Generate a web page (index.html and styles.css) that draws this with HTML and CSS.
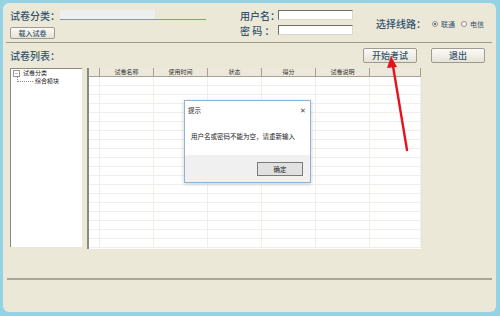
FILE: index.html
```html
<!DOCTYPE html>
<html lang="zh-CN">
<head>
  <meta charset="UTF-8">
  <title>考试客户端</title>
  <link rel="stylesheet" href="styles.css">
</head>
<body>
  <div class="window">
    <div class="top">
      <div class="paper">
        <div class="field-row">
          <span class="label">试卷分类：</span>
          <span class="combo"><span class="combo-fill"></span></span>
        </div>
        <button class="btn btn-small">载入试卷</button>
      </div>
      <div class="login">
        <div class="field-row">
          <span class="label login-label">用户名：</span>
          <span class="input"></span>
        </div>
        <div class="field-row">
          <span class="label login-label">密 码 ：</span>
          <span class="input"></span>
        </div>
      </div>
      <div class="line-select">
        <span class="label">选择线路：</span>
        <span class="radio"><span class="dot checked"></span>联通</span>
        <span class="radio"><span class="dot"></span>电信</span>
      </div>
    </div>

    <div class="list-bar">
      <span class="label">试卷列表：</span>
      <div class="actions">
        <button class="btn">开始考试</button>
        <button class="btn">退出</button>
      </div>
    </div>

    <div class="content">
      <div class="tree">
        <div class="tree-root"><span class="toggle">−</span>试卷分类</div>
        <div class="tree-child"><span class="branch"></span>综合模块</div>
      </div>
      <div class="grid">
        <table>
          <thead>
            <tr>
              <th class="c0"></th>
              <th>试卷名称</th>
              <th>使用时间</th>
              <th>状态</th>
              <th>得分</th>
              <th>试卷说明</th>
              <th class="last"></th>
            </tr>
          </thead>
          <tbody id="rows"></tbody>
        </table>
      </div>
    </div>

    <div class="status"></div>

    <!-- 提示框 -->
    <div class="dialog">
      <div class="dialog-title">
        <span>提示</span>
        <span class="close">✕</span>
      </div>
      <div class="dialog-body">用户名或密码不能为空，请重新输入</div>
      <div class="dialog-foot">
        <button class="ok">确定</button>
      </div>
    </div>

    <svg class="arrow" width="500" height="316" viewBox="0 0 500 316">
      <line x1="407" y1="150" x2="393" y2="66" stroke="#e3141c" stroke-width="2.4" stroke-linecap="round"/>
      <polygon points="391,56 387,68 397,67" fill="#e3141c"/>
    </svg>
  </div>

  <script>
    // пустые строки таблицы
    var body = document.getElementById('rows');
    for (var i = 0; i < 19; i++) {
      var tr = document.createElement('tr');
      for (var j = 0; j < 7; j++) {
        tr.appendChild(document.createElement('td'));
      }
      body.appendChild(tr);
    }
  </script>
</body>
</html>
```

FILE: styles.css
```css
body {
  margin: 0;
  background: #93d3e5;
  font-family: "Noto Sans CJK SC", "Noto Sans", sans-serif;
  width: 500px;
  height: 316px;
  overflow: hidden;
}
.window {
  position: relative;
  margin: 3px 4px 0 3px;
  height: 309px;
  background: #ebe8d8;
  border-radius: 6px;
  display: flex;
  flex-direction: column;
}
.label {
  font-size: 10px;
  line-height: 12px;
  font-weight: 500;
  color: #34536f;
  white-space: nowrap;
}
/* верхняя панель */
.top {
  height: 40px;
  margin: 0 4px 0 3px;
  padding: 7px 0 0 4px;
  box-sizing: border-box;
  border-bottom: 1px solid #9f998a;
  display: flex;
}
.paper {
  width: 230px;
  display: flex;
  flex-direction: column;
  align-items: flex-start;
}
.field-row {
  display: flex;
  align-items: flex-start;
  height: 12px;
}
.combo {
  display: block;
  width: 146px;
  height: 9px;
  border-bottom: 1px solid #7f9aa6;
}
.combo-fill {
  display: block;
  width: 95px;
  height: 9px;
  background: #eef0ef;
}
.btn {
  font-family: inherit;
  background: linear-gradient(#fbfaf6, #e6e3d6);
  border: 1px solid #9d9b92;
  border-radius: 2px;
  color: #34536f;
  font-weight: 500;
  font-size: 9px;
  line-height: 13px;
  width: 54px;
  height: 15px;
  padding: 0;
  cursor: pointer;
}
.btn-small {
  width: 45px;
  height: 12px;
  font-size: 7px;
  line-height: 10px;
  margin-top: 5px;
}
.login {
  display: flex;
  flex-direction: column;
  gap: 3px;
}
.login-label {
  width: 38px;
}
.input {
  display: block;
  width: 73px;
  height: 8px;
  background: #fff;
  border-top: 1px solid #6f6d66;
  border-left: 1px solid #6f6d66;
  border-right: 1px solid #dcd9cc;
  border-bottom: 1px solid #dcd9cc;
}
.line-select {
  display: flex;
  align-items: center;
  margin: 8px 0 0 23px;
  height: 12px;
}
.radio {
  display: flex;
  align-items: center;
  font-size: 7px;
  color: #34536f;
  margin-left: 6px;
}
.radio:first-of-type {
  margin-left: 8px;
}
.dot {
  width: 4px;
  height: 4px;
  border: 1px solid #8a8a8a;
  border-radius: 50%;
  background: #fff;
  margin-right: 3px;
  position: relative;
}
.dot.checked::after {
  content: "";
  position: absolute;
  left: 1px;
  top: 1px;
  width: 2px;
  height: 2px;
  border-radius: 50%;
  background: #333;
}
/* список */
.list-bar {
  display: flex;
  align-items: center;
  justify-content: space-between;
  padding: 3px 11px 0 7px;
  height: 19px;
}
.actions {
  display: flex;
  gap: 14px;
}
.content {
  display: flex;
  align-items: flex-start;
  gap: 5px;
  padding: 3px 0 0 7px;
}
.tree {
  width: 71px;
  height: 178px;
  background: #fff;
  border-top: 1px solid #8c8a80;
  border-left: 1px solid #8c8a80;
  font-size: 6px;
  line-height: 8px;
  color: #222;
}
.tree-root {
  display: flex;
  align-items: center;
  height: 8px;
  padding-left: 2px;
}
.toggle {
  width: 5px;
  height: 5px;
  border: 1px solid #999;
  font-size: 6px;
  line-height: 5px;
  text-align: center;
  margin-right: 3px;
  color: #333;
}
.tree-child {
  display: flex;
  align-items: center;
  height: 8px;
  padding-left: 6px;
}
.branch {
  width: 15px;
  height: 5px;
  border-left: 1px dotted #888;
  border-bottom: 1px dotted #888;
  margin: -5px 2px 0 0;
}
.grid {
  width: 332px;
  height: 181px;
  background: #fff;
  border-left: 2px solid #8c8a80;
  overflow: hidden;
}
table {
  border-collapse: collapse;
  width: 100%;
  table-layout: fixed;
}
th {
  height: 8px;
  font-size: 6px;
  line-height: 8px;
  font-weight: normal;
  color: #333;
  background: #ece9dc;
  border-right: 1px solid #a5a295;
  border-bottom: 1px solid #a5a295;
  padding: 0;
  width: 53px;
}
th.c0 {
  width: 10px;
}
th.last {
  width: auto;
}
td {
  height: 8px;
  padding: 0;
  border-right: 1px solid #f0efea;
  border-bottom: 1px solid #f0efea;
}
/* строка состояния */
.status {
  margin: 29px 4px 0 4px;
  border-top: 2px solid #aaa597;
}
/* окно подсказки */
.dialog {
  position: absolute;
  left: 181px;
  top: 97px;
  width: 125px;
  height: 81px;
  background: #fff;
  border: 1px solid #8ab4d8;
  display: flex;
  flex-direction: column;
  font-size: 6.5px;
  color: #222;
  box-shadow: 0 1px 4px rgba(0,0,0,0.2);
}
.dialog-title {
  display: flex;
  justify-content: space-between;
  align-items: center;
  padding: 4px 4px 0 3px;
  height: 10px;
}
.close {
  font-size: 7px;
  color: #444;
}
.dialog-body {
  flex: 1;
  padding: 16px 0 0 6px;
}
.dialog-foot {
  height: 27px;
  background: #f0f0f0;
  display: flex;
  align-items: center;
  justify-content: flex-end;
  padding-right: 7px;
}
.ok {
  font-family: inherit;
  font-size: 6.5px;
  width: 46px;
  height: 14px;
  padding: 0;
  background: #e1e1e1;
  border: 1px solid #7a7a7a;
  color: #222;
}
.arrow {
  position: absolute;
  left: -3px;
  top: -3px;
  pointer-events: none;
}
```
